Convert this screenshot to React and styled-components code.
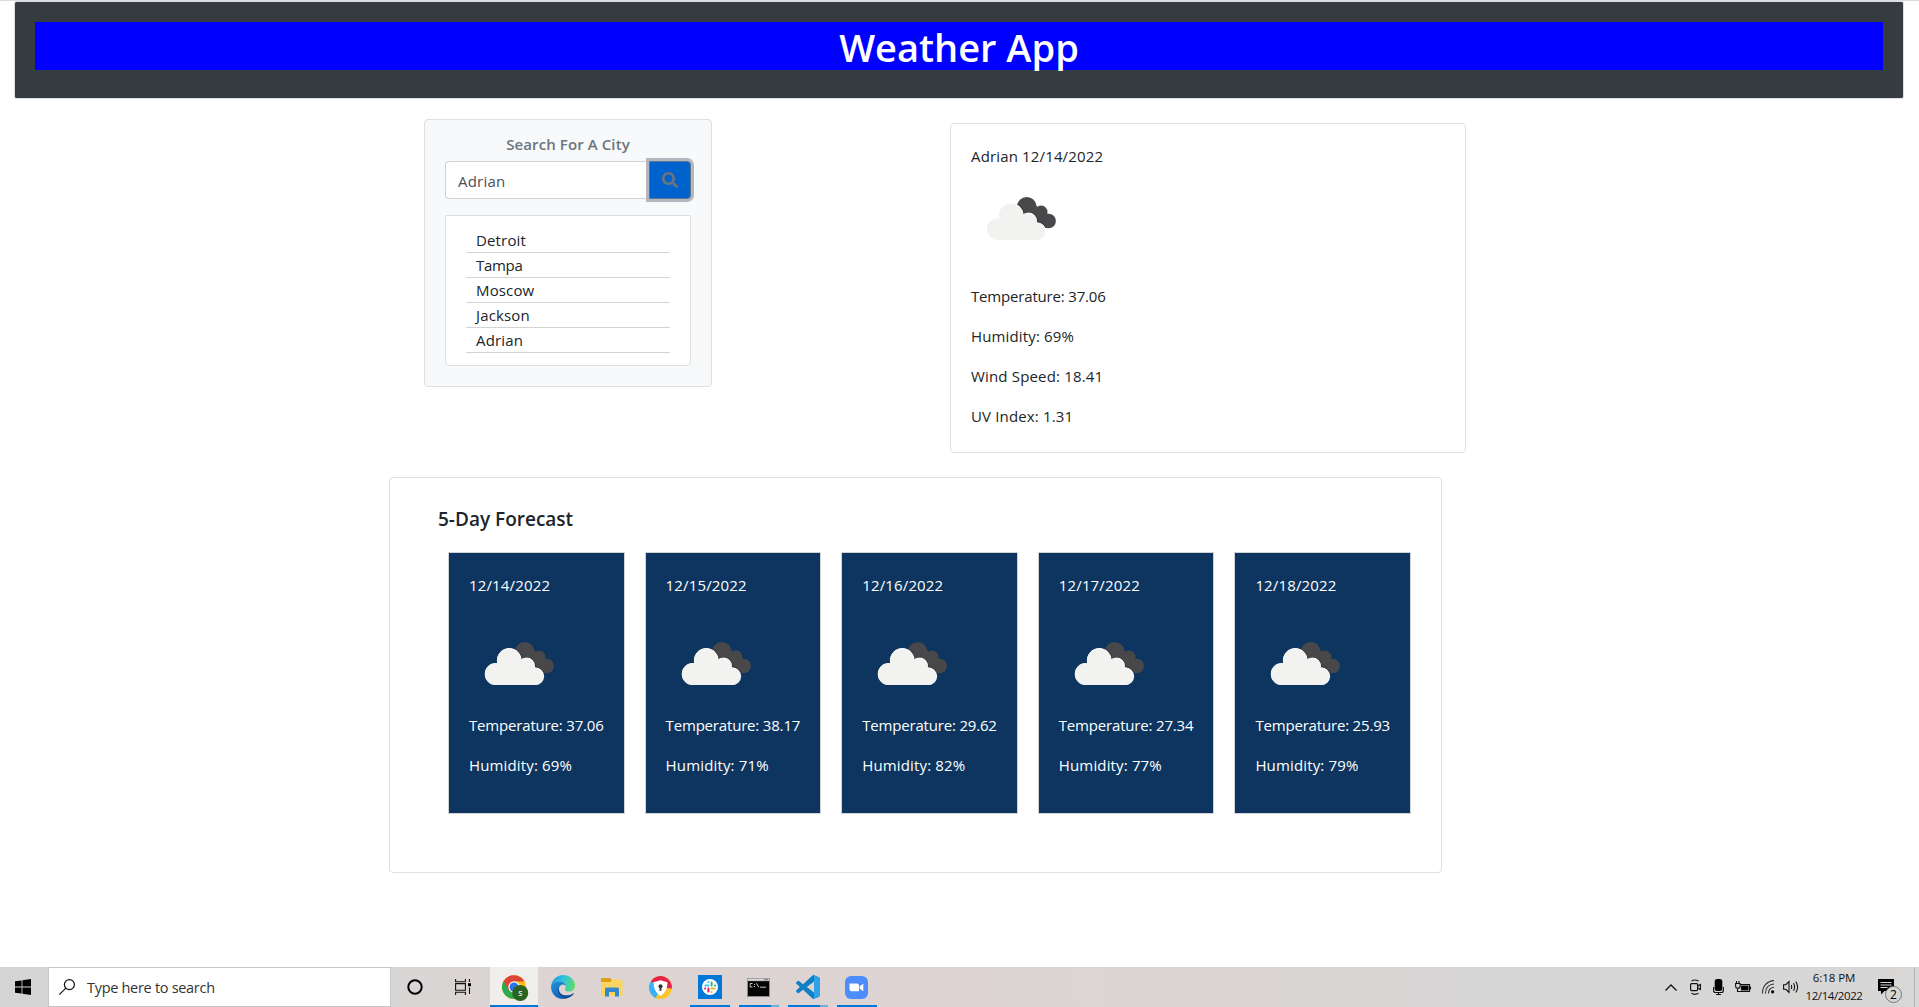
import React, { useId } from "react";
import styled, { createGlobalStyle } from "styled-components";
import { FaSearch } from "react-icons/fa";

const GlobalStyle = createGlobalStyle`
  *, *::before, *::after { box-sizing: border-box; }
  body {
    margin: 0;
    background: #fff;
    color: #212529;
    font-family: "Open Sans", "Noto Sans", sans-serif;
    font-size: 15px;
    line-height: 24px;
    overflow: hidden;
  }
`;

const Screen = styled.div`
  display: flex;
  flex-direction: column;
  height: 1007px;
  border-top: 1px solid #dbdcdf;
`;

const Header = styled.header`
  margin: 0 15px 0 14px;
  height: 98px;
  padding: 20px;
  border: 1px solid #dcdee1;
  border-radius: 2px;
  background: #363a41;
  background-clip: padding-box;
`;

const Title = styled.h1`
  margin: 0;
  height: 48px;
  background: #0000ff;
  color: #fff;
  font-size: 38px;
  font-weight: 600;
  line-height: 50px;
  text-align: center;
`;

const TopRow = styled.section`
  display: flex;
  align-items: flex-start;
  gap: 238px;
  padding: 20px 0 0 424px;
`;

const Card = styled.div`
  border: 1px solid #dfdfdf;
  border-radius: 4px;
  background: #fff;
`;

const SearchCard = styled(Card)`
  width: 288px;
  height: 268px;
  padding: 12px 20px;
  background: #f8f9fa;
`;

const SearchTitle = styled.h2`
  margin: 0 0 5px;
  color: #6c757d;
  font-size: 15px;
  font-weight: 600;
  letter-spacing: 0.1px;
  line-height: 24px;
  text-align: center;
`;

const SearchGroup = styled.div`
  display: flex;
  height: 38px;
  margin-bottom: 16px;
`;

const SearchInput = styled.input`
  width: 204px;
  padding: 1px 12px 0;
  border: 1px solid #ced4da;
  border-right: 0;
  border-radius: 4px 0 0 4px;
  outline: none;
  background: #fff;
  color: #495057;
  font: inherit;
  letter-spacing: 0.2px;
`;

const SearchButton = styled.button`
  display: flex;
  align-items: center;
  justify-content: center;
  width: 42px;
  padding: 0;
  border: 1px solid #5c7590;
  border-radius: 0 4px 4px 0;
  background: #0062cc;
  box-shadow: 0 0 0 3px #b2b8be;
  color: #6c757d;
  font-size: 16px;
`;

const History = styled.ul`
  margin: 0;
  height: 151px;
  padding: 12px 20px;
  border: 1px solid #dfdfdf;
  border-radius: 0 0 4px 4px;
  background: #fff;
  list-style: none;
`;

const HistoryItem = styled.li`
  height: 25px;
  padding: 1px 0 0 10px;
  border-bottom: 1px solid #d3d3d3;
  letter-spacing: ${(p) => p.$track ?? 0.15}px;
  line-height: 23px;
`;

const CurrentCard = styled(Card)`
  width: 516px;
  height: 330px;
  margin-top: 4px;
  padding: 21px 20px;
`;

const Line = styled.p`
  margin: 0 0 ${(p) => p.$gap ?? 16}px;
  height: 24px;
  line-height: 22px;
  letter-spacing: ${(p) => p.$track ?? 0.15}px;
  white-space: nowrap;
`;

const CloudSvg = styled.svg`
  display: block;
  width: 100px;
  height: 100px;
  margin-bottom: ${(p) => p.$gap}px;
`;

const ForecastCard = styled(Card)`
  width: 1053px;
  height: 396px;
  margin: 24px 0 0 389px;
  padding: 29px 0 0 48px;
`;

const ForecastTitle = styled.h3`
  margin: 0 0 21px;
  font-size: 19px;
  font-weight: 600;
  line-height: 24px;
`;

const Days = styled.div`
  display: flex;
  gap: 20px;
  padding-left: 10px;
`;

const DayCard = styled.article`
  flex: none;
  width: 176.6px;
  height: 262px;
  padding: 20.5px 20px;
  border: 1px solid #cfd3d6;
  background: #0d355f;
  color: #fff;
`;

const Taskbar = styled.footer`
  display: flex;
  height: 40px;
  margin-top: auto;
  background: linear-gradient(90deg, #d4d4d4 0, #d9d6d6 390px, #ddd3d3 560px, #ddd4d4 1100px, #d7d6d6 1500px, #d8d7d6 100%);
`;

const Glyph = styled.svg`
  display: block;
  flex: none;
  width: ${(p) => p.$w}px;
  height: ${(p) => p.$h ?? p.$w}px;
  overflow: visible;
`;

const StartButton = styled.div`
  display: flex;
  align-items: center;
  width: 48px;
  padding-left: 15px;
`;

const TaskSearch = styled.div`
  display: flex;
  align-items: center;
  gap: 12px;
  width: 343px;
  padding-left: 10px;
  border: 1px solid #c6c6c6;
  background: #fff;
  color: #333;
  font-size: 14.5px;
  letter-spacing: -0.3px;
`;

const TaskSearchText = styled.span`
  padding-top: 1px;
`;

const SystemButton = styled.div`
  display: flex;
  align-items: center;
  justify-content: center;
  width: ${(p) => p.$w}px;
`;

const Apps = styled.div`
  display: flex;
  gap: 1px;
  margin-left: 3px;
`;

const AppTile = styled.div`
  position: relative;
  display: flex;
  align-items: center;
  justify-content: center;
  width: 48px;
  padding-right: ${(p) => p.$nudge ?? 0}px;
  background: ${(p) => (p.$active ? "#f0eeed" : "transparent")};
  &::after {
    content: "";
    position: absolute;
    left: ${(p) => (p.$active ? 0 : 4)}px;
    right: ${(p) => (p.$active ? 0 : 4)}px;
    bottom: 0;
    height: 2px;
    background: ${(p) =>
      p.$stacked
        ? "linear-gradient(90deg, #0078d7 32px, #6aaee3 32px)"
        : p.$active || p.$open
        ? "#0078d7"
        : "transparent"};
  }
`;

const Tray = styled.div`
  display: flex;
  align-items: center;
  margin-left: auto;
  color: #000;
`;

const TrayIcons = styled.div`
  display: flex;
  align-items: center;
`;

const TraySlot = styled.div`
  display: flex;
  width: ${(p) => p.$w}px;
`;

const Clock = styled.div`
  width: 60px;
  margin: 0 0 0 4px;
  line-height: 18px;
  text-align: center;
  color: #111;
`;

const Time = styled.div`
  font-size: 11.5px;
  letter-spacing: -0.05px;
`;

const DateText = styled.div`
  font-size: 11.5px;
  letter-spacing: -0.4px;
`;

const Notices = styled.div`
  display: flex;
  width: 51px;
  height: 40px;
  padding: 12px 0 0 14px;
  border-right: 1px solid #b5b5b5;
`;

const NoticeIcon = styled.div`
  position: relative;
`;

const NoticeBadge = styled.span`
  position: absolute;
  left: 7px;
  top: 7px;
  width: 17px;
  height: 17px;
  border: 1px solid #777;
  border-radius: 50%;
  background: #d6d6d6;
  font-size: 12px;
  line-height: 15px;
  text-align: center;
`;

const PeekStrip = styled.div`
  width: 4px;
`;

function FrontShape() {
  return (
    <>
      <circle cx="26.8" cy="60" r="11" />
      <circle cx="40.3" cy="46.4" r="12.3" />
      <circle cx="57.6" cy="52" r="8.4" />
      <circle cx="66.2" cy="62.2" r="8.9" />
      <path d="M26.8 50H60l6.2 21.1H26.8z" />
    </>
  );
}

function Clouds({ gap = 0 }) {
  const id = useId();
  return (
    <CloudSvg viewBox="0 0 100 100" $gap={gap}>
      <defs>
        <clipPath id={id}>
          <circle cx="55.8" cy="37.8" r="9.8" />
          <circle cx="70.2" cy="42.9" r="6.3" />
          <circle cx="77.6" cy="52" r="7.3" />
          <path d="M48 40 60 33 70 40 76 50 77 59.3 60 55z" />
        </clipPath>
      </defs>
      <g clipPath={`url(#${id})`}>
        <rect width="100" height="100" fill="#48484a" />
        <g fill="#2a2a2d" stroke="#2a2a2d" strokeWidth="1.4">
          <FrontShape />
        </g>
      </g>
      <g fill="#fff">
        <FrontShape />
      </g>
      <g fill="#f2f2f1" transform="translate(0.3 1) scale(0.985)">
        <FrontShape />
      </g>
    </CloudSvg>
  );
}

function StartIcon() {
  return (
    <Glyph $w={16} viewBox="0 0 16 16">
      <path d="M0 2.3 6.6 1.4v6.1H0zM7.4 1.3 16 0v7.5H7.4zM0 8.4h6.6v6.2L0 13.7zM7.4 8.4H16V16l-8.6-1.3z" />
    </Glyph>
  );
}

function MagnifierIcon() {
  return (
    <Glyph $w={16} viewBox="0 0 16 16" fill="none" stroke="#111" strokeWidth="1.2">
      <circle cx="10.4" cy="5.6" r="5" />
      <path d="M6.8 9.2.4 15.6" />
    </Glyph>
  );
}

function CortanaIcon() {
  return (
    <Glyph $w={16} viewBox="0 0 16 16" fill="none" stroke="#000" strokeWidth="2">
      <circle cx="8" cy="8" r="6.7" />
    </Glyph>
  );
}

function TaskViewIcon() {
  return (
    <Glyph $w={16} viewBox="0 0 16 16" fill="none" stroke="#111" strokeWidth="1.1">
      <path d="M.6 0v2.7h9.8V0M.6 16v-2.7h9.8V16M.6 4.6h9.8v6.6H.6zM14.5 0v3M14.5 8.5V15" />
      <path d="M13 4.2h3v3h-3z" fill="#000" stroke="none" />
    </Glyph>
  );
}

function ChromeIcon() {
  return (
    <Glyph $w={24} viewBox="0 0 24 24">
      <circle cx="12" cy="12" r="12" fill="#fbc116" />
      <path d="M12 12 1.6 6A12 12 0 0 0 12 24l5.2-9z" fill="#2da94f" />
      <path d="M1.6 6A12 12 0 0 1 22.4 6.5H12L6.8 15z" fill="#db4437" />
      <circle cx="12" cy="12" r="5.7" fill="#fff" />
      <circle cx="12" cy="12" r="4.5" fill="#2b75e8" />
      <circle cx="18.2" cy="18" r="8" fill="#2b6420" />
      <text x="18.2" y="20.8" fill="#fff" fontSize="7.5" fontWeight="600" textAnchor="middle">S</text>
    </Glyph>
  );
}

function EdgeIcon() {
  return (
    <Glyph $w={24} viewBox="0 0 24 24">
      <defs>
        <linearGradient id="edgeTop" x1="0" x2="1" y1="0.3" y2="0.5">
          <stop offset="0" stopColor="#2398dc" />
          <stop offset="0.5" stopColor="#30c3df" />
          <stop offset="1" stopColor="#61dd68" />
        </linearGradient>
        <linearGradient id="edgeLeft" x1="0" x2="0.5" y1="0" y2="1">
          <stop offset="0" stopColor="#1f94dc" />
          <stop offset="1" stopColor="#1261b2" />
        </linearGradient>
      </defs>
      <path d="M0 11.5C.7 5 5.7 0 12.1 0 18.6 0 24 4.6 24 10.7c0 3.4-2.6 5.9-6 5.9-2.9 0-4.2-1-4.2-1.9 0-.8 1-1.2 1-3C14.8 8.700 11.7 6.5 8 6.5c-4 0-6.800 2.2-8 5z" fill="url(#edgeTop)" />
      <path d="M0 11.5C1 8.3 4 6.5 8 6.5c3.9 0 6.8 2.1 6.8 5.1-.3-1.2-1.5-2-2.9-2-2.7 0-4.6 3.1-4.6 6.1 0 4 3.2 7.700 7.3 8C7 25.5 0 19.9 0 11.5z" fill="url(#edgeLeft)" />
      <path d="M9.3 10.5c-1.3 1.3-1.5 3.2-1.2 4.9.7 3.1 3.5 4.9 7.2 4.9 2.9 0 5.2-.8 6.9-2.1.4-.3.9.1.6.6A12 12 0 0 1 14.6 23.7C10 23.5 7 19.9 7 15.8c0-2.3.9-4.2 2.3-5.3z" fill="#0b4e99" />
    </Glyph>
  );
}

function FolderIcon() {
  return (
    <Glyph $w={22} $h={19} viewBox="0 0 22 19">
      <path d="M0 1Q0 0 1 0h8l1.5 2H19v5H0z" fill="#dda012" />
      <path d="M0 4h9.5l2-2.5H20q1.5 0 1.5 1.5v15H0z" fill="#fcd462" />
      <path d="M4 18.5V11q0-1.5 1.5-1.5h11Q18 9.5 18 11v7.5h-4V14H8v4.5z" fill="#3489c9" />
    </Glyph>
  );
}

function SecureBrowserIcon() {
  return (
    <Glyph $w={23} viewBox="0 0 24 24">
      <circle cx="12" cy="12" r="12" fill="#fbc530" />
      <path d="M12 12 2 5.400A12 12 0 0 0 7 22.900z" fill="#38b0f5" />
      <path d="M2 5.400A12 12 0 0 1 23.900 13L12 12z" fill="#e5204a" />
      <path d="M12 5.200c2 1 4.300 1.600 6.500 1.700C18.500 13 17 17 12 20 7 17 5.500 13 5.500 6.900 7.700 6.800 10 6.200 12 5.200z" fill="#fff" stroke="#fff" strokeWidth="1.5" />
      <circle cx="12" cy="10.700" r="2.1" fill="#333" />
      <path d="M11 11h2v4.5h-2z" fill="#333" />
    </Glyph>
  );
}

function SlackIcon() {
  return (
    <Glyph $w={24} viewBox="0 0 24 24" fill="none" strokeWidth="2" strokeLinecap="round">
      <path d="M0 0h24v24H0z" fill="#0078d7" />
      <circle cx="12" cy="12" r="8" fill="#fff" />
      <path d="M10.500 7v.1M7.400 10.400h3" stroke="#36c5f0" />
      <path d="M13.600 7.400v3M17 10.400h.1" stroke="#2eb67d" />
      <path d="M13.600 13.600h3M13.600 17v.1" stroke="#ecb22e" />
      <path d="M10.400 13.600v3M7 13.600h.1" stroke="#e01e5a" />
    </Glyph>
  );
}

function TerminalIcon() {
  return (
    <Glyph $w={23} $h={19} viewBox="0 0 23 19">
      <path d="M0 0h23v19H0z" fill="#8b8b8b" />
      <path d="M.7.7h21.600v2H.7z" fill="#d8d8d8" />
      <path d="M1 3.2h21V18H1z" fill="#050505" />
      <path d="M17 1.2h4v1h-4z" fill="#777" />
      <g stroke="#ddd" strokeWidth="0.9" fill="none">
        <path d="M5.500 5.500H3.200v3.500h2.300M7.500 6v1M7.500 8v1M9.500 5.300l2.300 4M13 9.200h6" />
      </g>
    </Glyph>
  );
}

function CodeIcon() {
  return (
    <Glyph $w={24} viewBox="0 0 24 24">
      <path
        d="M23.150 2.587L18.210.210a1.494 1.494 0 0 0-1.705.290l-9.460 8.630-4.120-3.128a.999.999 0 0 0-1.276.057L.327 7.261A1 1 0 0 0 .326 8.740L3.899 12 .326 15.260a1 1 0 0 0 .001 1.479L1.650 17.940a.999.999 0 0 0 1.276.057l4.120-3.128 9.460 8.630a1.492 1.492 0 0 0 1.704.290l4.942-2.377A1.500 1.500 0 0 0 24 20.060V3.939a1.500 1.500 0 0 0-.850-1.352zm-5.146 14.861L10.826 12l7.178-5.448v10.896z"
        fill="#127fc3"
      />
      <path d="M18 .2 23.150 2.587Q24 3 24 3.939V20.060q0 .9-.850 1.352L18 23.800z" fill="#2fa2ea" />
    </Glyph>
  );
}

function MeetingIcon() {
  return (
    <Glyph $w={23} viewBox="0 0 23 23">
      <rect width="23" height="23" rx="6" fill="#4c8dfb" />
      <path d="M4.5 7.500h7.500q2 0 2 2v5.800H6.500q-2 0-2-2zM14.700 10.300l3.600-2.600v7.600l-3.600-2.600z" fill="#fff" />
    </Glyph>
  );
}

function TrayGlyphs() {
  return (
    <TrayIcons>
      <TraySlot $w={25}>
        <Glyph $w={12} $h={7} viewBox="0 0 12 7" fill="none" stroke="#111" strokeWidth="1.3">
          <path d="M.5 6.500 6 1l5.500 5.500" />
        </Glyph>
      </TraySlot>
      <TraySlot $w={23}>
        <Glyph $w={11} $h={16} viewBox="0 0 11 16" fill="none" stroke="#111" strokeWidth="1.2">
          <rect x="0.6" y="4.600" width="7" height="7" rx="1" />
          <path d="M7.600 7 10.400 5.500v5L7.600 9M1.500 2Q5 0 8.500 2M1.500 14.300q3.500 2 7 0" />
        </Glyph>
      </TraySlot>
      <TraySlot $w={22}>
        <Glyph $w={11} $h={16} viewBox="0 0 11 16" fill="none" stroke="#111" strokeWidth="1.1">
          <rect x="1.700" y="0" width="7.600" height="12" rx="2.5" fill="#000" stroke="none" />
          <path d="M.6 8v3.500q0 2 2 2h5.800q2 0 2-2V8M5.500 13.500v2M3 15.500h5" />
        </Glyph>
      </TraySlot>
      <TraySlot $w={27}>
        <Glyph $w={16} $h={12} viewBox="0 0 16 12" fill="none" stroke="#111" strokeWidth="1.1">
          <path d="M5 3.500h9.500v7H5M2.500 7.500v3H5M1.500 0v2.500M4 0v2.500M.6 2.500h4.500v2.800q0 2-2.200 2t-2.300-2z" />
          <path d="M6.500 5h6.500v4H6.500z" fill="#000" />
          <path d="M15.500 5.500v3" />
        </Glyph>
      </TraySlot>
      <TraySlot $w={21}>
        <Glyph $w={12} $h={14} viewBox="0 0 12 14" fill="none" stroke="#333" strokeWidth="1.1">
          <path d="M.5 13.500C.5 6 5 1 12 .6M3.500 13.500C3.500 8 6.500 4.500 12 4M6.500 13.500C6.500 10 8.500 7.800 12 7.300" />
          <circle cx="10.600" cy="11.800" r="1.600" fill="#000" stroke="none" />
        </Glyph>
      </TraySlot>
      <TraySlot $w={17}>
        <Glyph $w={16} $h={14} viewBox="0 0 16 14" fill="none" stroke="#111" strokeWidth="1.1">
          <path d="M.6 4.700h2.200L6 1.500v11L2.800 9.300H.6zM8.300 5q1 2 0 4M10.500 3.300q2.200 3.700 0 7.400M12.800 1.500q3.600 5.500 0 11" />
        </Glyph>
      </TraySlot>
    </TrayIcons>
  );
}

const cities = [
  { name: "Detroit" },
  { name: "Tampa", track: -0.3 },
  { name: "Moscow" },
  { name: "Jackson" },
  { name: "Adrian" },
];

const days = [
  { date: "12/14/2022", temp: "37.06", humidity: "69%" },
  { date: "12/15/2022", temp: "38.17", humidity: "71%" },
  { date: "12/16/2022", temp: "29.62", humidity: "82%" },
  { date: "12/17/2022", temp: "27.34", humidity: "77%" },
  { date: "12/18/2022", temp: "25.93", humidity: "79%" },
];

export default function App() {
  return (
    <Screen>
      <GlobalStyle />
      <Header>
        <Title>Weather App</Title>
      </Header>

      <TopRow>
        <SearchCard>
          <SearchTitle>Search For A City</SearchTitle>
          <SearchGroup>
            <SearchInput defaultValue="Adrian" />
            <SearchButton aria-label="Search">
              <FaSearch />
            </SearchButton>
          </SearchGroup>
          <History>
            {cities.map((city) => (
              <HistoryItem key={city.name} $track={city.track}>{city.name}</HistoryItem>
            ))}
          </History>
        </SearchCard>

        <CurrentCard>
          <Line $gap={0}>Adrian 12/14/2022</Line>
          <Clouds gap={16} />
          <Line $track={-0.18}>Temperature: 37.06</Line>
          <Line>Humidity: 69%</Line>
          <Line $track={0.17}>Wind Speed: 18.41</Line>
          <Line>UV Index: 1.31</Line>
        </CurrentCard>
      </TopRow>

      <ForecastCard>
        <ForecastTitle>5-Day Forecast</ForecastTitle>
        <Days>
          {days.map((day) => (
            <DayCard key={day.date}>
              <Line>{day.date}</Line>
              <Clouds />
              <Line $track={-0.18}>Temperature: {day.temp}</Line>
              <Line>Humidity: {day.humidity}</Line>
            </DayCard>
          ))}
        </Days>
      </ForecastCard>

      <Taskbar>
        <StartButton>
          <StartIcon />
        </StartButton>
        <TaskSearch>
          <MagnifierIcon />
          <TaskSearchText>Type here to search</TaskSearchText>
        </TaskSearch>
        <SystemButton $w={48}>
          <CortanaIcon />
        </SystemButton>
        <SystemButton $w={48}>
          <TaskViewIcon />
        </SystemButton>
        <Apps>
          <AppTile $active><ChromeIcon /></AppTile>
          <AppTile><EdgeIcon /></AppTile>
          <AppTile $nudge={1}><FolderIcon /></AppTile>
          <AppTile $nudge={1}><SecureBrowserIcon /></AppTile>
          <AppTile $open><SlackIcon /></AppTile>
          <AppTile $stacked $nudge={1}><TerminalIcon /></AppTile>
          <AppTile $stacked><CodeIcon /></AppTile>
          <AppTile $open $nudge={1}><MeetingIcon /></AppTile>
        </Apps>
        <Tray>
          <TrayGlyphs />
          <Clock>
            <Time>6:18 PM</Time>
            <DateText>12/14/2022</DateText>
          </Clock>
          <Notices>
            <NoticeIcon>
              <Glyph $w={16} viewBox="0 0 16 16">
                <path d="M0 0h16v12H6.5L3 15.5V12H0z" />
                <path d="M2.5 3.5h11M2.5 6h11M2.5 8.5h7" stroke="#d8d8d8" />
              </Glyph>
              <NoticeBadge>2</NoticeBadge>
            </NoticeIcon>
          </Notices>
          <PeekStrip />
        </Tray>
      </Taskbar>
    </Screen>
  );
}
